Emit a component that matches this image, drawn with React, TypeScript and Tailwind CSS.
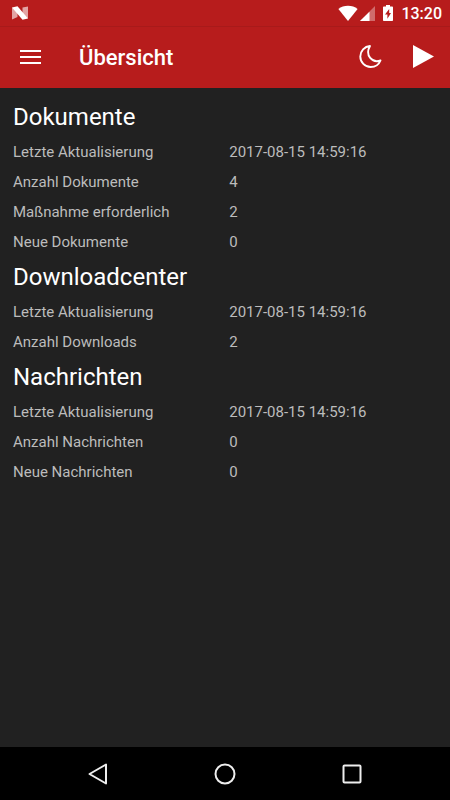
type Row = { label: string; value: string };
type Section = { title: string; rows: Row[] };

const sections: Section[] = [
  {
    title: "Dokumente",
    rows: [
      { label: "Letzte Aktualisierung", value: "2017-08-15 14:59:16" },
      { label: "Anzahl Dokumente", value: "4" },
      { label: "Maßnahme erforderlich", value: "2" },
      { label: "Neue Dokumente", value: "0" },
    ],
  },
  {
    title: "Downloadcenter",
    rows: [
      { label: "Letzte Aktualisierung", value: "2017-08-15 14:59:16" },
      { label: "Anzahl Downloads", value: "2" },
    ],
  },
  {
    title: "Nachrichten",
    rows: [
      { label: "Letzte Aktualisierung", value: "2017-08-15 14:59:16" },
      { label: "Anzahl Nachrichten", value: "0" },
      { label: "Neue Nachrichten", value: "0" },
    ],
  },
];

const StatusBar = () => (
  <div className="flex h-[26px] items-center bg-[#b71c1c] pr-2 pl-3">
    <svg width="16" height="14" viewBox="0 0 16 14" fill="#fff">
      <path d="M0 1.500v12l5.500-2.500V4zM10.500 1.500 16 .5v12l-5.500-3z" opacity=".6" />
      <path d="M0 1.500 5.500 .3 16 12.500 10.500 13.700z" />
    </svg>
    <div className="ml-auto flex items-center">
      <svg width="20" height="16" viewBox="0 0 20 16" fill="#fff">
        <path d="M10 16 .4 4.100C3 1.900 6.300.8 10 .8s7 1.100 9.600 3.300z" />
      </svg>
      <svg className="ml-0.5" width="15" height="16" viewBox="0 0 15 16" fill="#fff">
        <path d="M15 1v15H0z" opacity=".35" />
        <path d="M9.500 6.800V16H0z" />
      </svg>
      <svg className="ml-2" width="10" height="16" viewBox="0 0 10 16" fill="#fff">
        <path
          fillRule="evenodd"
          d="M3 0h4v1.500h2.200q.8 0 .8.800v12.900q0 .8-.8.800H.8q-.8 0-.8-.8V2.300q0-.8.800-.8H3zM6.200 4 2 9.500h2.400v4.200L8 8H6.200z"
        />
      </svg>
      <span className="ml-2 pt-px text-[16px] leading-6 font-medium">13:20</span>
    </div>
  </div>
);

const Header = () => (
  <header className="flex h-[62px] items-center border-t border-[#a81a1a] bg-[#b71c1c] pr-4 pb-px pl-5">
    <button type="button" aria-label="Menü">
      <svg width="21" height="16" viewBox="0 0 21 16" fill="#fff">
        <path d="M0 1h21v2H0zM0 7h21v2H0zM0 13h21v2H0z" />
      </svg>
    </button>
    <h1 className="ml-[38px] flex-1 pt-px text-[22px] leading-7 font-medium">Übersicht</h1>
    <button type="button" aria-label="Nachtmodus">
      <svg width="24" height="24" viewBox="0 0 24 24" fill="none" stroke="#fff" strokeWidth="1.900">
        <path
          d="M12 1C6.500 1.500 2.300 6 2.300 11.500c0 5.800 4.600 10.500 10.300 10.500 4.500 0 8.300-2.500 9.900-6.500C14.500 18.500 6.500 10.500 12 1z"
          strokeLinejoin="round"
        />
      </svg>
    </button>
    <button type="button" aria-label="Start" className="ml-[30px]">
      <svg width="22" height="24" viewBox="0 0 22 24" fill="#fff">
        <path d="M1 0v23L22 11.500z" />
      </svg>
    </button>
  </header>
);

const NavigationBar = () => (
  <nav className="grid h-[53px] grid-cols-3 items-center justify-items-center bg-black px-[34px]">
    <button type="button" aria-label="Zurück">
      <svg width="20" height="22" viewBox="0 0 20 22" fill="none" stroke="#eee" strokeWidth="2">
        <path d="M18 1.500v19L1.500 11z" strokeLinejoin="round" />
      </svg>
    </button>
    <button type="button" aria-label="Startseite">
      <svg width="22" height="22" viewBox="0 0 22 22" fill="none" stroke="#eee" strokeWidth="2">
        <circle cx="11" cy="11" r="9.500" />
      </svg>
    </button>
    <button type="button" aria-label="Letzte Apps">
      <svg width="20" height="20" viewBox="0 0 20 20" fill="none" stroke="#eee" strokeWidth="2">
        <rect x="1.500" y="1.500" width="17" height="17" rx="1" />
      </svg>
    </button>
  </nav>
);

const App = () => (
  <div className="flex min-h-screen flex-col bg-[#212121] font-[Roboto,sans-serif] text-white">
    <StatusBar />
    <Header />
    <main className="flex-1 px-[13px] pt-[9px]">
      {sections.map((section) => (
        <section key={section.title}>
          <h2 className="text-[24px] leading-10">{section.title}</h2>
          <table className="w-full table-fixed text-left text-[15px] leading-5 text-[#bcbcbc]">
            <tbody>
              {section.rows.map((row) => (
                <tr key={row.label} className="h-[30px]">
                  <th scope="row" className="w-[51%] p-0 font-normal">
                    {row.label}
                  </th>
                  <td className="p-0">{row.value}</td>
                </tr>
              ))}
            </tbody>
          </table>
        </section>
      ))}
    </main>
    <NavigationBar />
  </div>
);

export default App;
